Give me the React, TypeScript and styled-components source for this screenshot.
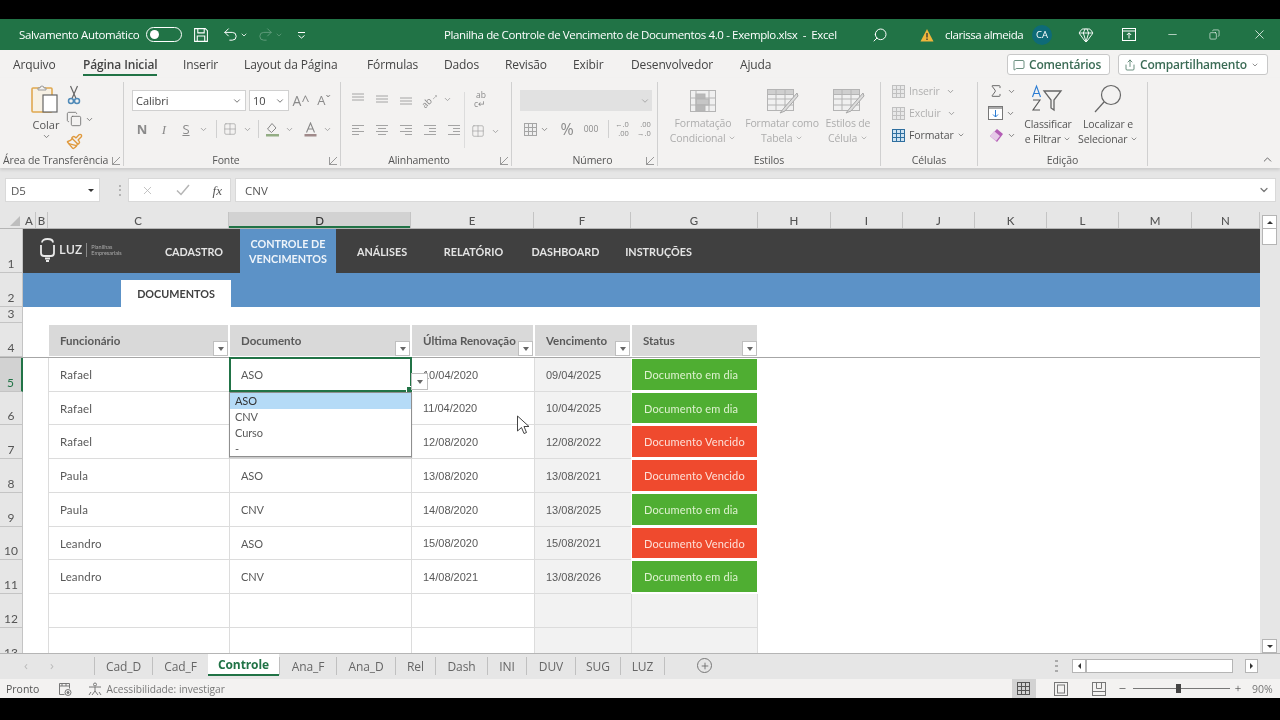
import React from 'react';
import styled, { createGlobalStyle } from 'styled-components';
import {
  ChevronDown,
  ChevronUp,
  Copy,
  Gem,
  Grid2x2,
  MessageSquare,
  Minus,
  Paintbrush,
  Plus,
  Redo2,
  Search,
  Share,
  Sigma,
  Undo2,
  X,
} from 'lucide-react';

const GlobalStyle = createGlobalStyle`
  html, body {
    margin: 0;
    background: #000;
  }
  * {
    box-sizing: border-box;
  }
`;

const UI_FONT = `'Open Sans', 'Liberation Sans', sans-serif`;
const CELL_FONT = `Lato, 'Liberation Sans', sans-serif`;
const GREEN = '#217346';

const Page = styled.div`
  width: 1280px;
  height: 720px;
  padding: 19px 0 22px;
  background: #000;
  overflow: hidden;
`;

const Window = styled.div`
  height: 679px;
  display: flex;
  flex-direction: column;
  background: #f3f2f1;
  font-family: ${UI_FONT};
  filter: blur(0.35px);
`;

/* title bar */
const TitleBar = styled.header`
  height: 31px;
  flex: none;
  display: flex;
  align-items: center;
  background: ${GREEN};
  color: #fff;
  font-size: 11.5px;
  white-space: nowrap;
`;

const QuickAccess = styled.div`
  width: 444px;
  padding-left: 19px;
  display: flex;
  align-items: center;
`;

const AutoSave = styled.span`
  width: 127px;
  letter-spacing: -0.35px;
`;

const Toggle = styled.span`
  width: 36px;
  height: 15px;
  padding: 2px 3px;
  border: 1px solid #fff;
  border-radius: 8px;
  display: flex;
`;

const ToggleDot = styled.span`
  width: 9px;
  height: 9px;
  border-radius: 50%;
  background: #fff;
`;

const Slot = styled.span<{ $w: number; $ml?: number; $color?: string }>`
  width: ${(p) => p.$w}px;
  margin-left: ${(p) => p.$ml ?? 0}px;
  flex: none;
  display: inline-flex;
  align-items: center;
  justify-content: center;
  color: ${(p) => p.$color ?? 'inherit'};
`;

const MirroredSlot = styled(Slot)`
  transform: scaleX(-1);
`;

const DocTitle = styled.span`
  width: 392px;
  letter-spacing: -0.37px;
  font-size: 11.5px;
`;

const UserName = styled.span`
  width: 78px;
  margin-left: 8px;
  letter-spacing: -0.45px;
`;

const Avatar = styled.span`
  width: 20px;
  height: 20px;
  margin-left: 9px;
  border-radius: 50%;
  background: #0e6b78;
  font-size: 9.5px;
  display: flex;
  align-items: center;
  justify-content: center;
`;

/* menu tabs */
const MenuBar = styled.nav`
  height: 28px;
  flex: none;
  display: flex;
  align-items: stretch;
  padding-left: 13px;
  background: #f3f2f1;
  color: #444;
  font-size: 12px;
`;

const MenuTab = styled.span<{ $w: number; $active?: boolean }>`
  width: ${(p) => p.$w}px;
  flex: none;
  position: relative;
  display: flex;
  align-items: center;
  justify-content: flex-start;
  letter-spacing: -0.13px;
  white-space: nowrap;
  font-weight: ${(p) => (p.$active ? 600 : 400)};
  &::after {
    content: '';
    display: ${(p) => (p.$active ? 'block' : 'none')};
    position: absolute;
    left: 0;
    width: 74px;
    bottom: 2px;
    height: 2px;
    background: ${GREEN};
  }
`;

const MenuActions = styled.div`
  margin-left: auto;
  padding: 4px 12px 3px 0;
  display: flex;
  gap: 8px;
`;

const ActionButton = styled.span<{ $w: number }>`
  width: ${(p) => p.$w}px;
  padding: 0 5px;
  display: flex;
  align-items: center;
  gap: 4px;
  background: #fff;
  border: 1px solid #c8c8c8;
  border-radius: 3px;
  color: #3b6b55;
  font-size: 12px;
  font-weight: 600;
  letter-spacing: -0.2px;
  white-space: nowrap;
`;

/* ribbon */
const Ribbon = styled.div`
  height: 90px;
  flex: none;
  display: flex;
  padding: 4px 0 2px;
  background: #f3f2f1;
  box-shadow: 0 2px 3px rgba(0, 0, 0, 0.12);
  position: relative;
  z-index: 1;
`;

const Group = styled.section<{ $w: number; $bare?: boolean }>`
  width: ${(p) => p.$w}px;
  flex: none;
  position: relative;
  display: flex;
  flex-direction: column;
  border-right: ${(p) => (p.$bare ? 'none' : '1px solid #d0d0d0')};
`;

const GroupBody = styled.div<{ $pl?: number; $pt?: number; $mt?: number }>`
  flex: 1;
  min-height: 0;
  margin-top: ${(p) => p.$mt ?? 0}px;
  padding: ${(p) => p.$pt ?? 8}px 0 0 ${(p) => p.$pl ?? 0}px;
  display: flex;
  flex-direction: column;
`;

const GroupRowBody = styled(GroupBody)`
  flex-direction: row;
`;

const GroupLabel = styled.div<{ $pl?: number; $pr?: number; $left?: boolean }>`
  height: 12px;
  padding: 0 ${(p) => p.$pr ?? 0}px 0 ${(p) => p.$pl ?? 0}px;
  line-height: 12px;
  text-align: ${(p) => (p.$left ? 'left' : 'center')};
  font-size: 10.5px;
  color: #555;
  white-space: nowrap;
  letter-spacing: -0.1px;
`;

const Launcher = styled.span`
  position: absolute;
  right: 3px;
  bottom: 1px;
  width: 8px;
  height: 8px;
  border-left: 1px solid #999;
  border-bottom: 1px solid #999;
  background: linear-gradient(135deg, transparent 45%, #999 45%, #999 55%, transparent 55%);
`;

const ToolRow = styled.div<{ $h?: number; $mt?: number }>`
  height: ${(p) => p.$h ?? 20}px;
  margin-top: ${(p) => p.$mt ?? 0}px;
  display: flex;
  align-items: center;
  color: #8a8a8a;
`;

const ComboBox = styled.span<{ $w: number; $ml?: number }>`
  width: ${(p) => p.$w}px;
  height: 21px;
  margin-left: ${(p) => p.$ml ?? 0}px;
  padding: 0 3px;
  flex: none;
  display: flex;
  align-items: center;
  justify-content: space-between;
  background: #fff;
  border: 1px solid #d0d0d0;
  font-size: 11px;
  color: #444;
`;

const DisabledCombo = styled.span`
  width: 132px;
  height: 21px;
  margin-left: 8px;
  padding-right: 2px;
  display: flex;
  align-items: center;
  justify-content: flex-end;
  background: #e1e1e1;
  color: #aaa;
`;

const Glyph = styled.span<{ $size?: number; $weight?: number; $italic?: boolean; $underline?: boolean; $color?: string }>`
  font-family: ${(p) => (p.$italic ? `'Liberation Serif', serif` : UI_FONT)};
  font-size: ${(p) => p.$size ?? 13}px;
  font-weight: ${(p) => p.$weight ?? 400};
  font-style: ${(p) => (p.$italic ? 'italic' : 'normal')};
  text-decoration: ${(p) => (p.$underline ? 'underline' : 'none')};
  color: ${(p) => p.$color ?? '#8a8a8a'};
  line-height: 1;
`;

const StackGlyph = styled(Glyph)`
  line-height: 9px;
  text-align: right;
`;

const TiltedGlyph = styled(Glyph)`
  display: inline-block;
  transform: rotate(-45deg);
`;

const ToolSep = styled.span<{ $ml?: number; $mr?: number }>`
  width: 1px;
  height: 18px;
  margin: 0 ${(p) => p.$mr ?? 0}px 0 ${(p) => p.$ml ?? 0}px;
  flex: none;
  background: #d0d0d0;
`;

const VerticalRule = styled.span`
  position: absolute;
  left: 123px;
  top: 10px;
  bottom: 18px;
  width: 1px;
  background: #dcdcdc;
`;

const PasteButton = styled.div`
  width: 38px;
  margin-left: 27px;
  display: flex;
  flex-direction: column;
  align-items: center;
  font-size: 11px;
  line-height: 15px;
  color: #555;
`;

const PasteLabel = styled.span`
  margin-top: 4px;
`;

const ClipTools = styled.div`
  margin-left: -2px;
  display: flex;
  flex-direction: column;
  gap: 5px;
`;

const EditTools = styled.div`
  width: 30px;
  flex: none;
  display: flex;
  flex-direction: column;
`;

const BigTool = styled.div<{ $w: number; $muted?: boolean }>`
  width: ${(p) => p.$w}px;
  flex: none;
  display: flex;
  flex-direction: column;
  align-items: center;
  font-size: 10.5px;
  line-height: 15px;
  white-space: nowrap;
  letter-spacing: -0.15px;
  color: ${(p) => (p.$muted ? '#adadad' : '#555')};
`;

const BigIcon = styled.div<{ $h: number }>`
  height: ${(p) => p.$h}px;
  display: flex;
  align-items: center;
  justify-content: center;
`;

const CellTool = styled.div<{ $muted?: boolean }>`
  height: 22px;
  display: flex;
  align-items: center;
  gap: 3px;
  font-size: 10.5px;
  letter-spacing: -0.1px;
  color: ${(p) => (p.$muted ? '#b0b0b0' : '#555')};
`;

const CollapseRibbon = styled.span`
  margin-left: auto;
  align-self: flex-end;
  padding-right: 6px;
  color: #555;
  display: flex;
`;

/* formula bar */
const FormulaBar = styled.div`
  height: 44px;
  flex: none;
  padding: 10px 4px 10px 5px;
  display: flex;
  align-items: stretch;
  background: #e6e6e6;
  font-size: 11.5px;
  color: #555;
`;

const FormulaBox = styled.div<{ $w?: number; $ml?: number }>`
  width: ${(p) => (p.$w ? `${p.$w}px` : 'auto')};
  flex: ${(p) => (p.$w ? 'none' : '1')};
  margin-left: ${(p) => p.$ml ?? 0}px;
  padding: 0 5px;
  display: flex;
  align-items: center;
  justify-content: space-between;
  background: #fff;
  border: 1px solid #d9d9d9;
  color: #555;
`;

const FormulaTools = styled(FormulaBox)`
  padding: 0 8px 0 12px;
`;

const FormulaInput = styled(FormulaBox)`
  padding-left: 9px;
`;

const Grip = styled.span`
  width: 10px;
  margin-left: 14px;
  align-self: center;
  color: #999;
  font-size: 12px;
  line-height: 10px;
  text-align: center;
`;

/* sheet */
const SheetArea = styled.div`
  flex: 1;
  min-height: 0;
  display: flex;
  position: relative;
  background: #e6e6e6;
  font-family: ${CELL_FONT};
  border-bottom: 1px solid #b5b5b5;
`;

const SheetGrid = styled.div`
  width: 1260px;
  flex: none;
  overflow: hidden;
  background: #fff;
`;

const ColumnHeaders = styled.div`
  height: 17px;
  display: grid;
  grid-template-columns: 23px 13px 12px 181px 182px 123px 97px 127px 73px 72px 72px 72px 72px 73px 68px;
  background: #e6e6e6;
  border-bottom: 1px solid #b5b5b5;
`;

const Corner = styled.div`
  position: relative;
  &::after {
    content: '';
    position: absolute;
    right: 3px;
    bottom: 2px;
    border-style: solid;
    border-width: 0 0 10px 10px;
    border-color: transparent transparent #bdbdbd transparent;
  }
`;

const ColumnHead = styled.div<{ $selected?: boolean }>`
  display: flex;
  align-items: center;
  justify-content: center;
  font-size: 11.5px;
  color: ${(p) => (p.$selected ? '#333' : '#555')};
  font-weight: 500;
  background: ${(p) => (p.$selected ? '#d2d2d2' : 'transparent')};
  border-right: 1px solid #c4c4c4;
  box-shadow: ${(p) => (p.$selected ? `inset 0 -2px 0 ${GREEN}` : 'none')};
`;

const Row = styled.div<{ $h: number; $line?: boolean }>`
  height: ${(p) => p.$h}px;
  display: grid;
  grid-template-columns: 23px 25px 181px 182px 123px 97px 127px 1fr;
  border-bottom: ${(p) => (p.$line ? '1px solid #a6a6a6' : 'none')};
`;

const RowHead = styled.div<{ $selected?: boolean }>`
  grid-column: 1;
  display: flex;
  align-items: flex-end;
  justify-content: center;
  padding-bottom: 1px;
  font-size: 12px;
  line-height: 14px;
  color: ${(p) => (p.$selected ? GREEN : '#555')};
  background: ${(p) => (p.$selected ? '#d2d2d2' : '#e6e6e6')};
  border-bottom: 1px solid #c4c4c4;
  border-right: ${(p) => (p.$selected ? `2px solid ${GREEN}` : '1px solid #c4c4c4')};
`;

const Banner = styled.div`
  grid-column: 2 / -1;
  padding-left: 16px;
  display: flex;
  align-items: stretch;
  background: #404040;
`;

const Logo = styled.div`
  width: 109px;
  flex: none;
  display: flex;
  align-items: center;
  color: #e8e8e8;
  padding-bottom: 2px;
`;

const LogoName = styled.span`
  margin-left: 3px;
  padding-right: 4px;
  border-right: 1px solid #888;
  font-family: ${UI_FONT};
  font-size: 12.5px;
  font-weight: 600;
  line-height: 14px;
`;

const LogoTag = styled.span`
  margin-left: 4px;
  font-size: 5.5px;
  line-height: 6px;
  color: #aaa;
`;

const NavItem = styled.div<{ $w: number; $active?: boolean }>`
  width: ${(p) => p.$w}px;
  flex: none;
  display: flex;
  align-items: center;
  justify-content: center;
  text-align: center;
  font-size: 10.8px;
  line-height: 15px;
  font-weight: 700;
  color: ${(p) => (p.$active ? '#eef4fa' : '#e4e4e4')};
  background: ${(p) => (p.$active ? '#5c92c7' : 'transparent')};
`;

const SubBand = styled.div`
  grid-column: 2 / -1;
  padding-left: 98px;
  display: flex;
  align-items: flex-end;
  background: #5c92c7;
`;

const SubTab = styled.div`
  width: 110px;
  height: 27px;
  display: flex;
  align-items: center;
  justify-content: center;
  background: #fff;
  font-size: 10.8px;
  font-weight: 700;
  color: #404040;
`;

const HeadCell = styled.div`
  position: relative;
  margin: 2px 1px 1px;
  padding-left: 11px;
  display: flex;
  align-items: center;
  background: #d9d9d9;
  font-size: 11.5px;
  font-weight: 700;
  color: #595959;
  white-space: nowrap;
`;

const FilterButton = styled.span`
  position: absolute;
  right: 0;
  bottom: 0;
  width: 15px;
  height: 15px;
  display: flex;
  align-items: center;
  justify-content: center;
  background: #fff;
  border: 1px solid #bfbfbf;
  &::after {
    content: '';
    border-style: solid;
    border-width: 4px 3.5px 0;
    border-color: #666 transparent transparent;
  }
`;

const DataCell = styled.div<{ $shade?: boolean }>`
  padding-left: 11px;
  display: flex;
  align-items: center;
  font-size: 11.5px;
  letter-spacing: 0.15px;
  color: #595959;
  white-space: nowrap;
  background: ${(p) => (p.$shade ? '#f2f2f2' : '#fff')};
  border-bottom: 1px solid #dcdcdc;
  border-left: 1px solid #dcdcdc;
  &:last-child {
    border-right: 1px solid #dcdcdc;
  }
`;

const DocCell = styled(DataCell)`
  font-size: 11px;
  letter-spacing: -0.1px;
`;

const DateCell = styled(DataCell)`
  font-family: 'Liberation Sans', Arial, sans-serif;
  font-size: 11px;
  letter-spacing: 0;
`;

const StatusCell = styled(DataCell)<{ $ok: boolean }>`
  padding-left: 12px;
  font-size: 11px;
  color: ${(p) => (p.$ok ? '#dff2d0' : '#fde0d8')};
  background: ${(p) => (p.$ok ? '#4fae32' : '#ef4a2e')};
  border: 1px solid #fff;
  border-bottom-width: 2px;
  &:last-child {
    border-right: 1px solid #fff;
  }
`;

const SelectedCell = styled(DocCell)`
  position: relative;
`;

const SelectionFrame = styled.span`
  position: absolute;
  inset: -1px -1px -1px -1px;
  border: 2px solid ${GREEN};
  pointer-events: none;
  &::after {
    content: '';
    position: absolute;
    right: -3px;
    bottom: -3px;
    width: 5px;
    height: 5px;
    background: ${GREEN};
    border: 1px solid #fff;
  }
`;

const ListArrow = styled(FilterButton)`
  right: -17px;
  bottom: 1px;
  width: 17px;
  height: 17px;
  z-index: 4;
`;

const ListBox = styled.ul`
  position: absolute;
  left: -1px;
  right: -1px;
  top: calc(100% + 1px);
  z-index: 5;
  margin: 0;
  padding: 0;
  height: 65px;
  list-style: none;
  background: #fff;
  border: 1px solid #8f8f8f;
  box-shadow: 0 1px 1px rgba(0, 0, 0, 0.2);
`;

const ListItem = styled.li<{ $active?: boolean }>`
  height: 16px;
  padding-left: 5px;
  font-size: 11px;
  line-height: 16px;
  color: ${(p) => (p.$active ? '#333' : '#595959')};
  background: ${(p) => (p.$active ? '#b5dbf7' : 'transparent')};
`;

const MouseCursor = styled.svg`
  position: absolute;
  left: 516px;
  top: 203px;
  z-index: 6;
`;

const VScroll = styled.div`
  flex: 1;
  padding: 3px 3px 0 2px;
  display: flex;
  flex-direction: column;
`;

const ScrollButton = styled.span<{ $w?: number; $end?: boolean }>`
  width: ${(p) => (p.$w ? `${p.$w}px` : 'auto')};
  height: 14px;
  margin-top: ${(p) => (p.$end ? 'auto' : '0')};
  flex: none;
  display: flex;
  align-items: center;
  justify-content: center;
  background: #fff;
  border: 1px solid #b5b5b5;
`;

const ScrollThumb = styled.span`
  height: 16px;
  flex: none;
  background: #fff;
  border: 1px solid #b5b5b5;
  border-top: none;
`;

const arrowEdge = { up: 'bottom', down: 'top', left: 'right', right: 'left' } as const;
const arrowOpposite = { up: 'top', down: 'bottom', left: 'left', right: 'right' } as const;

const Arrow = styled.span<{ $dir: 'up' | 'down' | 'left' | 'right'; $size?: number }>`
  width: 0;
  height: 0;
  border-style: solid;
  border-color: transparent;
  border-width: ${(p) => p.$size ?? 3.5}px;
  border-${(p) => arrowEdge[p.$dir]}-color: #333;
  border-${(p) => arrowOpposite[p.$dir]}-width: 0;
`;

/* sheet tabs */
const TabBar = styled.div`
  height: 25px;
  flex: none;
  display: flex;
  align-items: flex-start;
  background: #e6e6e6;
  font-size: 12px;
  color: #666;
`;

const TabNav = styled.div`
  width: 94px;
  height: 22px;
  padding-left: 24px;
  display: flex;
  align-items: center;
  gap: 22px;
  color: #bbb;
  font-size: 13px;
`;

const SheetTab = styled.span<{ $w: number; $active?: boolean }>`
  width: ${(p) => p.$w}px;
  flex: none;
  display: flex;
  align-items: center;
  justify-content: center;
  letter-spacing: -0.1px;
  border-left: ${(p) => (p.$active ? 'none' : '1px solid #c0c0c0')};
  background: ${(p) => (p.$active ? '#fff' : 'transparent')};
  color: ${(p) => (p.$active ? GREEN : '#666')};
  font-weight: ${(p) => (p.$active ? 700 : 400)};
  box-shadow: ${(p) => (p.$active ? `inset 0 -2px 0 ${GREEN}` : 'none')};
  margin-top: ${(p) => (p.$active ? '-1px' : '3px')};
  height: ${(p) => (p.$active ? '23px' : '18px')};
`;

const TabEnd = styled.span`
  width: 1px;
  height: 18px;
  margin-top: 3px;
  background: #c0c0c0;
`;

const AddSheet = styled.span`
  width: 15px;
  height: 15px;
  margin: 4px 0 0 32px;
  display: flex;
  align-items: center;
  justify-content: center;
  border: 1px solid #777;
  border-radius: 50%;
  color: #666;
`;

const HScroll = styled.div`
  margin: 5px 22px 0 auto;
  display: flex;
  align-items: center;
`;

const SplitDots = styled.span`
  width: 3px;
  height: 12px;
  margin-right: 14px;
  background: repeating-linear-gradient(#aaa 0 2px, transparent 2px 5px);
`;

const HTrack = styled.span`
  width: 147px;
  height: 14px;
  background: #fff;
  border: 1px solid #b5b5b5;
  margin-right: 12px;
`;

/* status bar */
const StatusBar = styled.footer`
  height: 19px;
  flex: none;
  padding-left: 6px;
  display: flex;
  align-items: center;
  background: #f3f2f1;
  font-size: 10.5px;
  color: #555;
`;

const A11yText = styled.span`
  margin-left: 4px;
  color: #777;
  font-size: 10.2px;
`;

const ViewButton = styled.span<{ $active?: boolean; $ml?: number }>`
  width: 24px;
  height: 19px;
  margin-left: ${(p) => p.$ml ?? 0}px;
  display: flex;
  align-items: center;
  justify-content: center;
  background: ${(p) => (p.$active ? '#d2d2d2' : 'transparent')};
`;

const ZoomTrack = styled.span`
  width: 97px;
  height: 1px;
  margin: 0 4px;
  position: relative;
  background: #777;
  &::after {
    content: '';
    position: absolute;
    left: 43px;
    top: -4px;
    width: 5px;
    height: 9px;
    background: #444;
  }
`;

const ZoomLabel = styled.span`
  margin-left: 10px;
  color: #777;
`;

const Chev = ({ color = '#777', size = 9 }: { color?: string; size?: number }) => (
  <ChevronDown size={size} color={color} strokeWidth={2.4} />
);

/* drawn icons */
const AlignIcon = ({
  lines,
  top = 1.5,
  gap = 3,
}: {
  lines: [number, number][];
  top?: number;
  gap?: number;
}) => (
  <svg width="14" height="14" viewBox="0 0 14 14" fill="none" stroke="#a4a4a4" strokeWidth="1">
    {lines.map(([x1, x2], i) => (
      <line key={i} x1={x1} x2={x2} y1={top + i * gap} y2={top + i * gap} />
    ))}
  </svg>
);

const full: [number, number] = [1, 13];

const PasteIcon = () => (
  <svg width="30" height="28" viewBox="0 0 30 28" fill="none">
    <rect x="1" y="3" width="20" height="24" rx="1" stroke="#e0a84f" strokeWidth="1.6" fill="#f7f1e4" />
    <path d="M7 5V3h2a2 2 0 0 1 4 0h2v2z" fill="#f3f2f1" stroke="#999" />
    <rect x="12" y="10" width="14" height="17" fill="#fff" stroke="#666" strokeWidth="1.2" />
  </svg>
);

const ScissorsIcon = () => (
  <svg width="14" height="20" viewBox="0 0 14 20" fill="none">
    <path d="M3.5 1 9 13.5M10.5 1 5 13.5" stroke="#666" strokeWidth="1.2" />
    <circle cx="4" cy="16" r="2.5" stroke="#4f8ab8" strokeWidth="1.5" />
    <circle cx="10" cy="16" r="2.5" stroke="#4f8ab8" strokeWidth="1.5" />
  </svg>
);

const TableIcon = () => (
  <svg width="36" height="28" viewBox="0 0 36 28" fill="none" stroke="#b4b4b4">
    <rect x="3.5" y="2.5" width="26" height="21" fill="#f0f0f0" />
    <rect x="3.5" y="2.5" width="26" height="5" fill="#cfcfcf" />
    <path d="M12 2v21M21 2v21M3 12h27M3 18h27" />
    <path d="M33 6 20 21l-4 5 5-2 13-15z" fill="#dcdcdc" stroke="#a8a8a8" />
  </svg>
);

const CondIcon = () => (
  <svg width="28" height="24" viewBox="0 0 28 24" stroke="#b4b4b4" fill="#f0f0f0">
    <rect x="1.5" y="1.5" width="25" height="21" />
    <rect x="7" y="5" width="9" height="5" fill="#b8b8b8" />
    <rect x="7" y="10" width="13" height="6" fill="#c6c6c6" />
    <rect x="7" y="16" width="9" height="6" fill="#b8b8b8" />
    <path d="M7 1v21M20 1v21M1 9h26M1 16h26" fill="none" />
  </svg>
);

const CellOpIcon = ({ color = '#c0c0c0', fill = '#e8e8e8' }: { color?: string; fill?: string }) => (
  <svg width="15" height="15" viewBox="0 0 15 15" stroke={color} fill={fill}>
    <rect x="1.5" y="1.5" width="12" height="12" />
    <path d="M5.5 1.5v12M9.5 1.5v12M1.5 5.5h12M1.5 9.5h12" fill="none" />
  </svg>
);

const BulbLogo = () => (
  <svg width="17" height="24" viewBox="0 0 17 24" fill="none" stroke="#e8e8e8" strokeWidth="1.8">
    <path d="M3 4.5C3 2.5 5 1 8.5 1S14 2.5 14 4.5" />
    <path d="M2 7v8c0 2 1.5 3 3 3h7c1.5 0 3-1 3-3V7" />
    <path d="M6 20.5h5M7 23h3" />
  </svg>
);

const CursorPath = () => (
  <MouseCursor width="14" height="20" viewBox="0 0 14 20">
    <path d="M1.5 1v15l4-3.500 2.500 6 2.500-1-2.500-6h5z" fill="#fff" stroke="#444" strokeWidth="1" />
  </MouseCursor>
);

const menuTabs: [string, number, boolean?][] = [
  ['Arquivo', 70],
  ['Página Inicial', 100, true],
  ['Inserir', 61],
  ['Layout da Página', 123],
  ['Fórmulas', 77],
  ['Dados', 61],
  ['Revisão', 68],
  ['Exibir', 58],
  ['Desenvolvedor', 109],
  ['Ajuda', 40],
];

const columns = ['A', 'B', 'C', 'D', 'E', 'F', 'G', 'H', 'I', 'J', 'K', 'L', 'M', 'N'];

// the open list covers the document of rows 6 and 7, so those stay empty
const records = [
  { name: 'Rafael', doc: 'ASO', renewed: '10/04/2020', due: '09/04/2025', ok: true },
  { name: 'Rafael', doc: '', renewed: '11/04/2020', due: '10/04/2025', ok: true },
  { name: 'Rafael', doc: '', renewed: '12/08/2020', due: '12/08/2022', ok: false },
  { name: 'Paula', doc: 'ASO', renewed: '13/08/2020', due: '13/08/2021', ok: false },
  { name: 'Paula', doc: 'CNV', renewed: '14/08/2020', due: '13/08/2025', ok: true },
  { name: 'Leandro', doc: 'ASO', renewed: '15/08/2020', due: '15/08/2021', ok: false },
  { name: 'Leandro', doc: 'CNV', renewed: '14/08/2021', due: '13/08/2026', ok: true },
];

const rowHeights = [34, 33, 34, 34, 34, 33, 34];
const sheetTabs: [string, number][] = [
  ['Cad_D', 58],
  ['Cad_F', 56],
  ['Controle', 71],
  ['Ana_F', 57],
  ['Ana_D', 59],
  ['Rel', 40],
  ['Dash', 52],
  ['INI', 39],
  ['DUV', 49],
  ['SUG', 45],
  ['LUZ', 44],
];

const App: React.FC = () => (
  <Page>
    <GlobalStyle />
    <Window>
      <TitleBar>
        <QuickAccess>
          <AutoSave>Salvamento Automático</AutoSave>
          <Toggle>
            <ToggleDot />
          </Toggle>
          <Slot $w={18} $ml={10}>
            <svg width="16" height="16" viewBox="0 0 15 15" fill="none" stroke="#fff">
              <path d="M1.5 1.5h10l2 2v10h-12zM4.5 1.5v4h6v-4M4 13.5v-5h7v5" />
            </svg>
          </Slot>
          <Slot $w={18} $ml={11}>
            <Undo2 size={17} strokeWidth={1.4} />
          </Slot>
          <Slot $w={10}>
            <Chev color="#fff" size={8} />
          </Slot>
          <Slot $w={18} $ml={7} $color="#5f9b7a">
            <Redo2 size={17} strokeWidth={1.4} />
          </Slot>
          <Slot $w={10} $color="#5f9b7a">
            <Chev color="#5f9b7a" size={8} />
          </Slot>
          <Slot $w={14} $ml={10}>
            <svg width="9" height="8" viewBox="0 0 9 8" fill="none" stroke="#fff">
              <path d="M1 1.5h7M1.5 4.5 4.5 7l3-2.5" />
            </svg>
          </Slot>
        </QuickAccess>
        <DocTitle>Planilha de Controle de Vencimento de Documentos 4.0 - Exemplo.xlsx&nbsp; -&nbsp; Excel</DocTitle>
        <MirroredSlot $w={24} $ml={32}>
          <Search size={16} strokeWidth={1.5} />
        </MirroredSlot>
        <Slot $w={20} $ml={25}>
          <svg width="14" height="14" viewBox="0 0 14 14">
            <path d="M7 1 13.5 13.5H.5z" fill="#f0b63c" />
            <path d="M7 5v4.5M7 10.5V12" stroke="#333" strokeWidth="1.3" />
          </svg>
        </Slot>
        <UserName>clarissa almeida</UserName>
        <Avatar>CA</Avatar>
        <Slot $w={20} $ml={24}>
          <Gem size={16} strokeWidth={1.4} />
        </Slot>
        <Slot $w={20} $ml={23}>
          <svg width="14" height="13" viewBox="0 0 14 13" fill="none" stroke="#fff">
            <rect x=".5" y=".5" width="13" height="12" />
            <path d="M.5 3h13M7 10.5V5M4.8 7 7 4.8 9.2 7" />
          </svg>
        </Slot>
        <Slot $w={20} $ml={23}>
          <Minus size={13} strokeWidth={1.2} />
        </Slot>
        <MirroredSlot $w={20} $ml={23}>
          <Copy size={11} strokeWidth={1.3} />
        </MirroredSlot>
        <Slot $w={20} $ml={24}>
          <X size={15} strokeWidth={1.2} />
        </Slot>
      </TitleBar>

      <MenuBar>
        {menuTabs.map(([label, w, active]) => (
          <MenuTab key={label} $w={w} $active={active}>
            {label}
          </MenuTab>
        ))}
        <MenuActions>
          <ActionButton $w={103}>
            <MessageSquare size={12} strokeWidth={1.5} />
            Comentários
          </ActionButton>
          <ActionButton $w={150}>
            <Share size={12} strokeWidth={1.5} />
            Compartilhamento
            <Chev size={8} />
          </ActionButton>
        </MenuActions>
      </MenuBar>

      <Ribbon>
        <Group $w={124}>
          <GroupRowBody $pt={3}>
            <PasteButton>
              <PasteIcon />
              <PasteLabel>Colar</PasteLabel>
              <Chev />
            </PasteButton>
            <ClipTools>
              <Slot $w={22}>
                <ScissorsIcon />
              </Slot>
              <ToolRow $h={18}>
                <Slot $w={22}>
                  <Copy size={16} color="#666" strokeWidth={1.2} />
                </Slot>
                <Chev />
              </ToolRow>
              <Slot $w={22}>
                <Paintbrush size={17} color="#e09a3e" strokeWidth={2} />
              </Slot>
            </ClipTools>
          </GroupRowBody>
          <GroupLabel $left $pl={3}>
            Área de Transferência
          </GroupLabel>
          <Launcher />
        </Group>

        <Group $w={217}>
          <GroupBody $pl={8}>
            <ToolRow $h={21}>
              <ComboBox $w={114}>
                Calibri <Chev size={10} />
              </ComboBox>
              <ComboBox $w={40} $ml={3}>
                10 <Chev size={10} />
              </ComboBox>
              <Slot $w={22} $ml={1}>
                <Glyph $size={14}>A^</Glyph>
              </Slot>
              <Slot $w={24}>
                <Glyph $size={13}>Aˇ</Glyph>
              </Slot>
            </ToolRow>
            <ToolRow $mt={8}>
              <Slot $w={20}>
                <Glyph $weight={700}>N</Glyph>
              </Slot>
              <Slot $w={24}>
                <Glyph $italic>I</Glyph>
              </Slot>
              <Slot $w={20}>
                <Glyph $underline>S</Glyph>
              </Slot>
              <Slot $w={14}>
                <Chev color="#a0a0a0" />
              </Slot>
              <ToolSep $ml={6} />
              <Slot $w={26}>
                <Grid2x2 size={14} color="#a0a0a0" strokeWidth={1.2} />
              </Slot>
              <Slot $w={9}>
                <Chev color="#a0a0a0" />
              </Slot>
              <ToolSep $ml={6} />
              <Slot $w={26}>
                <svg width="15" height="15" viewBox="0 0 15 15" fill="none">
                  <path d="M7 1.5 2.5 7l4 3.5L11 6z" stroke="#888" />
                  <rect x="1" y="12" width="13" height="2.5" fill="#93ad84" />
                </svg>
              </Slot>
              <Slot $w={9}>
                <Chev color="#a0a0a0" />
              </Slot>
              <Slot $w={22} $ml={5}>
                <svg width="15" height="15" viewBox="0 0 15 15" fill="none">
                  <path d="M3.5 10.5 7.5 1l4 9.5M5 7h5" stroke="#888" strokeWidth="1.1" />
                  <rect x="1.5" y="12" width="12" height="2.5" fill="#a08a8a" />
                </svg>
              </Slot>
              <Slot $w={12}>
                <Chev color="#a0a0a0" />
              </Slot>
            </ToolRow>
          </GroupBody>
          <GroupLabel $pr={12}>Fonte</GroupLabel>
          <Launcher />
        </Group>

        <Group $w={171}>
          <VerticalRule />
          <GroupBody $pl={5} $pt={8}>
            <ToolRow $h={18}>
              <Slot $w={24}>
                <AlignIcon lines={[full, full, full]} top={2} />
              </Slot>
              <Slot $w={24}>
                <AlignIcon lines={[full, full, full]} top={4} />
              </Slot>
              <Slot $w={24}>
                <AlignIcon lines={[full, full, full]} top={6} />
              </Slot>
              <Slot $w={24}>
                <TiltedGlyph $size={9}>ab→</TiltedGlyph>
              </Slot>
              <Slot $w={11}>
                <Chev color="#a0a0a0" />
              </Slot>
              <Slot $w={24} $ml={15}>
                <StackGlyph $size={8.5}>
                  ab
                  <br />
                  c↵
                </StackGlyph>
              </Slot>
            </ToolRow>
            <ToolRow $h={18} $mt={14}>
              <Slot $w={24}>
                <AlignIcon lines={[full, [1, 8], full, [1, 8]]} />
              </Slot>
              <Slot $w={24}>
                <AlignIcon lines={[full, [3, 11], full, [3, 11]]} />
              </Slot>
              <Slot $w={24}>
                <AlignIcon lines={[full, [6, 13], full, [6, 13]]} />
              </Slot>
              <Slot $w={24}>
                <AlignIcon lines={[full, [6, 13], [6, 13], full]} />
              </Slot>
              <Slot $w={24}>
                <AlignIcon lines={[full, [6, 13], [6, 13], full]} />
              </Slot>
              <Slot $w={24}>
                <Grid2x2 size={14} color="#a0a0a0" strokeWidth={1.2} />
              </Slot>
              <Slot $w={11}>
                <Chev color="#a0a0a0" />
              </Slot>
            </ToolRow>
          </GroupBody>
          <GroupLabel $pr={14}>Alinhamento</GroupLabel>
          <Launcher />
        </Group>

        <Group $w={146}>
          <GroupBody>
            <ToolRow $h={21}>
              <DisabledCombo>
                <Chev color="#aaa" size={10} />
              </DisabledCombo>
            </ToolRow>
            <ToolRow $mt={8}>
              <Slot $w={10} />
              <Slot $w={16}>
                <CellOpIcon color="#a5a5a5" fill="#efefef" />
              </Slot>
              <Slot $w={12}>
                <Chev color="#888" />
              </Slot>
              <Slot $w={20} $ml={7}>
                <Glyph $size={16}>%</Glyph>
              </Slot>
              <Slot $w={22} $ml={3}>
                <Glyph $size={8.5}>000</Glyph>
              </Slot>
              <ToolSep $ml={6} />
              <Slot $w={22} $ml={2}>
                <StackGlyph $size={7.5}>
                  ←.0
                  <br />
                  .00
                </StackGlyph>
              </Slot>
              <Slot $w={22}>
                <StackGlyph $size={7.5}>
                  .00
                  <br />
                  →.0
                </StackGlyph>
              </Slot>
            </ToolRow>
          </GroupBody>
          <GroupLabel $pl={16}>Número</GroupLabel>
          <Launcher />
        </Group>

        <Group $w={223}>
          <GroupRowBody $pl={6} $pt={3}>
            <BigTool $w={78} $muted>
              <BigIcon $h={31}>
                <CondIcon />
              </BigIcon>
              Formatação
              <span>
                Condicional <Chev color="#aaa" size={8} />
              </span>
            </BigTool>
            <BigTool $w={80} $muted>
              <BigIcon $h={31}>
                <TableIcon />
              </BigIcon>
              Formatar como
              <span>
                Tabela <Chev color="#aaa" size={8} />
              </span>
            </BigTool>
            <BigTool $w={52} $muted>
              <BigIcon $h={31}>
                <TableIcon />
              </BigIcon>
              Estilos de
              <span>
                Célula <Chev color="#aaa" size={8} />
              </span>
            </BigTool>
          </GroupRowBody>
          <GroupLabel>Estilos</GroupLabel>
        </Group>

        <Group $w={97}>
          <GroupBody $pl={10} $pt={0} $mt={-2}>
            <CellTool $muted>
              <CellOpIcon />
              Inserir
              <Slot $w={14} $ml={1}>
                <Chev color="#999" />
              </Slot>
            </CellTool>
            <CellTool $muted>
              <CellOpIcon />
              Excluir
              <Slot $w={14} $ml={1}>
                <Chev color="#999" />
              </Slot>
            </CellTool>
            <CellTool>
              <CellOpIcon color="#2f6f9f" fill="#cfe3f2" />
              Formatar
              <Chev size={8} />
            </CellTool>
          </GroupBody>
          <GroupLabel>Células</GroupLabel>
        </Group>

        <Group $w={170}>
          <GroupRowBody $pl={10} $pt={0} $mt={-2}>
            <EditTools>
              <ToolRow $h={22}>
                <Sigma size={16} color="#555" strokeWidth={1.3} />
                <Slot $w={14}>
                  <Chev />
                </Slot>
              </ToolRow>
              <ToolRow $h={22}>
                <svg width="15" height="14" viewBox="0 0 15 14" fill="#fff">
                  <rect x=".5" y=".5" width="14" height="13" stroke="#777" />
                  <path d="M7.5 4v7M5 8.5l2.5 2.5L10 8.5" stroke="#2b7cd3" fill="none" />
                  <rect x="1" y="1" width="13" height="2" fill="#aaa" />
                </svg>
                <Slot $w={15}>
                  <Chev />
                </Slot>
              </ToolRow>
              <ToolRow $h={22}>
                <svg width="16" height="15" viewBox="0 0 16 15">
                  <path d="M9 1 15 6l-6 8L2 8z" fill="#b35db5" />
                  <path d="M2 8l4-5 6 5-4 5z" fill="#e6c8e8" />
                </svg>
                <Slot $w={14}>
                  <Chev />
                </Slot>
              </ToolRow>
            </EditTools>
            <BigTool $w={60}>
              <BigIcon $h={37}>
                <svg width="34" height="30" viewBox="0 0 34 30" fill="none">
                  <path d="M1.5 13 5.5 2 9.5 13M3 9.5h5" stroke="#2b7cd3" strokeWidth="1.1" />
                  <path d="M2 16h7l-7 10h7" stroke="#555" strokeWidth="1.1" />
                  <path d="M13 7h17l-7 9v10l-3-2v-8z" stroke="#666" strokeWidth="1.3" />
                </svg>
              </BigIcon>
              Classificar
              <span>
                e Filtrar <Chev size={8} />
              </span>
            </BigTool>
            <BigTool $w={60}>
              <BigIcon $h={37}>
                <svg width="30" height="30" viewBox="0 0 30 30" fill="none" stroke="#666" strokeWidth="1.2">
                  <circle cx="18" cy="11" r="9.5" />
                  <path d="M11 18 2 28" />
                </svg>
              </BigIcon>
              Localizar e
              <span>
                Selecionar <Chev size={8} />
              </span>
            </BigTool>
          </GroupRowBody>
          <GroupLabel>Edição</GroupLabel>
        </Group>

        <CollapseRibbon>
          <ChevronUp size={13} strokeWidth={1.6} />
        </CollapseRibbon>
      </Ribbon>

      <FormulaBar>
        <FormulaBox $w={95}>
          D5
          <Arrow $dir="down" $size={3} />
        </FormulaBox>
        <Grip>⋮</Grip>
        <FormulaTools $w={103} $ml={4}>
          <X size={13} color="#b5b5b5" strokeWidth={1.5} />
          <svg width="14" height="12" viewBox="0 0 14 12" fill="none" stroke="#b5b5b5" strokeWidth="1.5">
            <path d="M1 6.5 5 10.5 13 1" />
          </svg>
          <Glyph $italic $size={13} $color="#555">
            fx
          </Glyph>
        </FormulaTools>
        <FormulaInput $ml={4}>
          CNV
          <Chev size={12} />
        </FormulaInput>
      </FormulaBar>

      <SheetArea>
        <SheetGrid>
          <ColumnHeaders>
            <Corner />
            {columns.map((c) => (
              <ColumnHead key={c} $selected={c === 'D'}>
                {c}
              </ColumnHead>
            ))}
          </ColumnHeaders>

          <Row $h={44}>
            <RowHead>1</RowHead>
            <Banner>
              <Logo>
                <BulbLogo />
                <LogoName>LUZ</LogoName>
                <LogoTag>
                  Planilhas
                  <br />
                  Empresariais
                </LogoTag>
              </Logo>
              <NavItem $w={92}>CADASTRO</NavItem>
              <NavItem $w={96} $active>
                CONTROLE DE
                <br />
                VENCIMENTOS
              </NavItem>
              <NavItem $w={92}>ANÁLISES</NavItem>
              <NavItem $w={91}>RELATÓRIO</NavItem>
              <NavItem $w={93}>DASHBOARD</NavItem>
              <NavItem $w={93}>INSTRUÇÕES</NavItem>
            </Banner>
          </Row>
          <Row $h={34}>
            <RowHead>2</RowHead>
            <SubBand>
              <SubTab>DOCUMENTOS</SubTab>
            </SubBand>
          </Row>
          <Row $h={16}>
            <RowHead>3</RowHead>
          </Row>
          <Row $h={35} $line>
            <RowHead>4</RowHead>
            <span />
            {['Funcionário', 'Documento', 'Última Renovação', 'Vencimento', 'Status'].map((h) => (
              <HeadCell key={h}>
                {h}
                <FilterButton />
              </HeadCell>
            ))}
          </Row>

          {records.map((r, i) => (
            <Row key={i} $h={rowHeights[i]}>
              <RowHead $selected={i === 0}>{i + 5}</RowHead>
              <span />
              <DataCell>{r.name}</DataCell>
              {i === 0 ? (
                <SelectedCell>
                  {r.doc}
                  <SelectionFrame />
                  <ListArrow />
                  <ListBox>
                    <ListItem $active>ASO</ListItem>
                    <ListItem>CNV</ListItem>
                    <ListItem>Curso</ListItem>
                    <ListItem>-</ListItem>
                  </ListBox>
                </SelectedCell>
              ) : (
                <DocCell>{r.doc}</DocCell>
              )}
              <DateCell>{r.renewed}</DateCell>
              <DateCell $shade>{r.due}</DateCell>
              <StatusCell $ok={r.ok}>{r.ok ? 'Documento em dia' : 'Documento Vencido'}</StatusCell>
            </Row>
          ))}

          {[12, 13].map((n) => (
            <Row key={n} $h={34}>
              <RowHead>{n}</RowHead>
              <span />
              <DataCell />
              <DataCell />
              <DataCell />
              <DataCell $shade />
              <DataCell $shade />
            </Row>
          ))}
        </SheetGrid>

        <VScroll>
          <ScrollButton>
            <Arrow $dir="up" />
          </ScrollButton>
          <ScrollThumb />
          <ScrollButton $end>
            <Arrow $dir="down" />
          </ScrollButton>
        </VScroll>
        <CursorPath />
      </SheetArea>

      <TabBar>
        <TabNav>
          <span>‹</span>
          <span>›</span>
        </TabNav>
        {sheetTabs.map(([label, w]) => (
          <SheetTab key={label} $w={w} $active={label === 'Controle'}>
            {label}
          </SheetTab>
        ))}
        <TabEnd />
        <AddSheet>
          <Plus size={10} strokeWidth={2} />
        </AddSheet>
        <HScroll>
          <SplitDots />
          <ScrollButton $w={14}>
            <Arrow $dir="left" />
          </ScrollButton>
          <HTrack />
          <ScrollButton $w={13}>
            <Arrow $dir="right" />
          </ScrollButton>
        </HScroll>
      </TabBar>

      <StatusBar>
        Pronto
        <Slot $w={14} $ml={19}>
          <svg width="14" height="14" viewBox="0 0 14 14" fill="none" stroke="#777">
            <path d="M1.5 12.5v-11h10v5M1.5 4h10M4 1.5V4M8 1.5V4M1.5 12.5h5" />
            <circle cx="10" cy="10.5" r="3" />
            <circle cx="10" cy="10.5" r="1" fill="#777" />
          </svg>
        </Slot>
        <Slot $w={14} $ml={16}>
          <svg width="14" height="14" viewBox="0 0 14 14" fill="none" stroke="#777">
            <circle cx="7" cy="2.5" r="1.5" />
            <path d="M1 5h12M7 5v4l-3 4M7 9l3 4M3 10l-2 3M11 10l2 3" />
          </svg>
        </Slot>
        <A11yText>Acessibilidade: investigar</A11yText>
        <ViewButton $active $ml={787}>
          <CellOpIcon color="#555" fill="#d2d2d2" />
        </ViewButton>
        <ViewButton $ml={13}>
          <svg width="14" height="14" viewBox="0 0 14 14" fill="none" stroke="#777">
            <rect x=".5" y=".5" width="13" height="13" />
            <rect x="3.5" y="3" width="7" height="8" />
          </svg>
        </ViewButton>
        <ViewButton $ml={14}>
          <svg width="14" height="14" viewBox="0 0 14 14" fill="none" stroke="#777">
            <rect x=".5" y=".5" width="13" height="13" />
            <path d="M4.5 .5v6h5v-6M.5 9.5h13" />
          </svg>
        </ViewButton>
        <Slot $w={12} $ml={6}>
          <Minus size={9} color="#555" />
        </Slot>
        <ZoomTrack />
        <Slot $w={8}>
          <Plus size={9} color="#555" />
        </Slot>
        <ZoomLabel>90%</ZoomLabel>
      </StatusBar>
    </Window>
  </Page>
);

export default App;
